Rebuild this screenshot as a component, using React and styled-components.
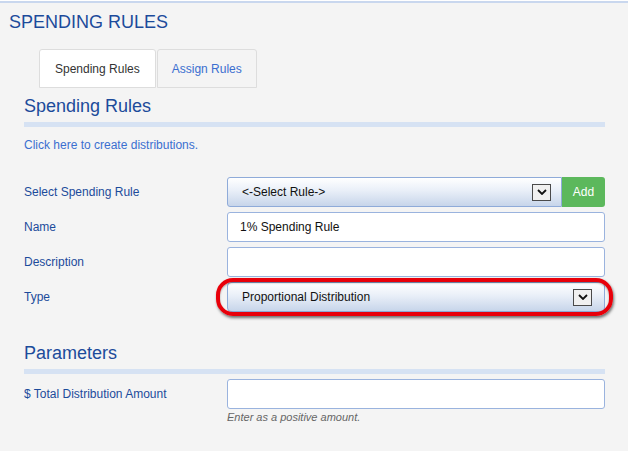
import React from "react";
import styled, { createGlobalStyle } from "styled-components";

const DARK_BLUE = "#1c4b9b";
const LINK_BLUE = "#3b6fd0";

const GlobalStyle = createGlobalStyle`
    html, body {
        margin: 0;
        padding: 0;
        background: #ffffff;
        font-family: "Liberation Sans", Arial, sans-serif;
    }
`

const Page = styled.div`
    margin-top: 1px;
    border-top: 2px solid #c9d7ee;
    background: #f4f4f4;
    min-height: 450px;
    box-sizing: border-box;
    padding-top: 9px;
`

const PageTitle = styled.h1`
    margin: 0 0 0 9px;
    font-size: 18px;
    line-height: 20px;
    font-weight: normal;
    color: ${DARK_BLUE};
`

const Tabs = styled.div`
    display: flex;
    margin: 17px 0 0 39px;
`

const Tab = styled.div`
    box-sizing: border-box;
    height: 39px;
    display: flex;
    align-items: center;
    padding: 0 ${(p) => p.$pad}px;
    margin-right: 1px;
    font-size: 12px;
    color: ${(p) => (p.$active ? "#333333" : LINK_BLUE)};
    background: ${(p) => (p.$active ? "#ffffff" : "#f4f4f4")};
    border: 1px solid #dddddd;
    border-radius: 3px 3px 0 0;
`

const Section = styled.section`
    padding: 0 23px 0 24px;
`

const SectionTitle = styled.h2`
    margin: ${(p) => p.$top}px 0 0;
    padding-bottom: 6px;
    border-bottom: 5px solid #d6e2f3;
    font-size: 18px;
    line-height: 20px;
    font-weight: normal;
    color: ${DARK_BLUE};
`

const CreateLink = styled.a`
    display: block;
    margin-top: 11px;
    font-size: 12px;
    line-height: 14px;
    color: ${LINK_BLUE};
    text-decoration: none;
    cursor: pointer;
`

const Form = styled.div`
    display: grid;
    grid-template-columns: 203px 378px;
    row-gap: 5px;
    margin-top: ${(p) => p.$top}px;
`

const Label = styled.label`
    display: flex;
    align-items: center;
    height: 30px;
    font-size: 12px;
    color: ${DARK_BLUE};
`

const FieldCell = styled.div`
    display: flex;
    flex-direction: column;
`

const SelectGroup = styled.div`
    display: flex;
    height: 30px;
`

const SelectBox = styled.div`
    position: relative;
    flex: 1;
    box-sizing: border-box;
    height: 30px;
    display: flex;
    align-items: center;
    justify-content: space-between;
    padding: 0 ${(p) => p.$arrowGap}px 0 14px;
    font-size: 12px;
    color: #111111;
    background: linear-gradient(to bottom, #ffffff 0%, #e9eff8 45%, #c7d5ea 100%);
    border: 1px solid #8fabd9;
    border-radius: ${(p) => (p.$joined ? "3px 0 0 3px" : "4px")};
`

const ArrowBox = styled.span`
    box-sizing: border-box;
    width: 19px;
    height: 17px;
    display: flex;
    align-items: center;
    justify-content: center;
    background: #f0f0f0;
    border: 1px solid #4a4a4a;
`

const AddButton = styled.button`
    width: 43px;
    height: 30px;
    border: none;
    border-radius: 0 3px 3px 0;
    background: #5cb85c;
    color: #ffffff;
    font-family: inherit;
    font-size: 12px;
    padding: 0;
`

const TextInput = styled.input`
    box-sizing: border-box;
    width: 100%;
    height: 30px;
    padding: 0 12px;
    font-family: inherit;
    font-size: 12px;
    color: #111111;
    background: #ffffff;
    border: 1px solid #9ab3de;
    border-radius: 3px;
    outline: none;
`

const Highlight = styled.div`
    position: relative;

    &::after {
        content: "";
        position: absolute;
        left: -11px;
        right: -8px;
        top: -4px;
        bottom: -4px;
        border: 4px solid #e8000a;
        border-radius: 17px;
        box-shadow: 1px 2px 3px rgba(0, 0, 0, 0.55), inset 0 1px 2px rgba(0, 0, 0, 0.35);
        pointer-events: none;
    }
`

const Hint = styled.div`
    margin-top: 2px;
    font-size: 11px;
    line-height: 13px;
    font-style: italic;
    color: #666666;
`

const Chevron = () => (
    <svg width="10" height="6" viewBox="0 0 10 6">
        <path d="M1 1 L5 5 L9 1" fill="none" stroke="#111" strokeWidth="1.8" />
    </svg>
)

const App = () => {
    return (
        <Page>
            <GlobalStyle />
            <PageTitle>SPENDING RULES</PageTitle>
            <Tabs>
                <Tab $active $pad={15}>Spending Rules</Tab>
                <Tab $pad={14}>Assign Rules</Tab>
            </Tabs>
            <Section>
                <SectionTitle $top={8}>Spending Rules</SectionTitle>
                <CreateLink>Click here to create distributions.</CreateLink>
                <Form $top={25}>
                    <Label>Select Spending Rule</Label>
                    <SelectGroup>
                        <SelectBox $joined $arrowGap={10}>
                            &lt;-Select Rule-&gt;
                            <ArrowBox><Chevron /></ArrowBox>
                        </SelectBox>
                        <AddButton>Add</AddButton>
                    </SelectGroup>

                    <Label>Name</Label>
                    <TextInput defaultValue="1% Spending Rule" />

                    <Label>Description</Label>
                    <TextInput defaultValue="" />

                    <Label>Type</Label>
                    <Highlight>
                        <SelectBox $arrowGap={12}>
                            Proportional Distribution
                            <ArrowBox><Chevron /></ArrowBox>
                        </SelectBox>
                    </Highlight>
                </Form>

                <SectionTitle $top={31}>Parameters</SectionTitle>
                <Form $top={5}>
                    <Label>$ Total Distribution Amount</Label>
                    <FieldCell>
                        <TextInput defaultValue="" />
                        <Hint>Enter as a positive amount.</Hint>
                    </FieldCell>
                </Form>
            </Section>
        </Page>
    )
}

export default App;
